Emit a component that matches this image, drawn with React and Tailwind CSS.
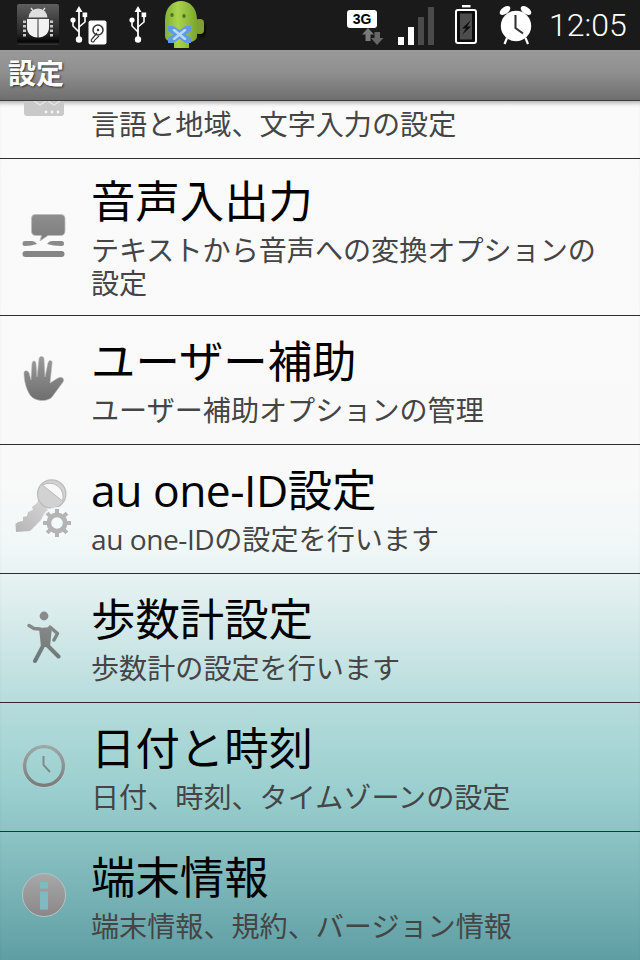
const FONT = "font-['Open_Sans','Noto_Sans_CJK_JP',sans-serif]";

function DebugIcon() {
  return (
    <svg width="44" height="44" viewBox="0 0 44 44">
      <defs>
        <linearGradient id="dbg" x1="0" y1="0" x2="0" y2="1">
          <stop offset="0" stopColor="#5e5e5e" />
          <stop offset="0.72" stopColor="#262626" />
          <stop offset="0.92" stopColor="#050505" />
          <stop offset="1" stopColor="#3a3a3a" />
        </linearGradient>
      </defs>
      <rect x="1" y="1" width="42" height="41" rx="2" fill="url(#dbg)" />
      <path d="M12.5 14.5 A9.5 9 0 0 1 31.5 14.5 Z" fill="#dedede" />
      <path d="M15 5 l3 4 M29 5 l-3 4" stroke="#dedede" strokeWidth="1.3" />
      <path d="M11 16 H21.5 V34.5 C15.5 34.5 11 30 11 25 Z M22.5 16 H33 V25 C33 30 28.5 34.5 22.5 34.5 Z" fill="#f2f2f2" />
      <path d="M7 17.5h3v2.6H7z M7 22h3v2.6H7z M7 26.5h3v2.6H7z M7 31h3v2.6H7z M34 17.5h3v2.6h-3z M34 22h3v2.6h-3z M34 26.5h3v2.6h-3z M34 31h3v2.6h-3z" fill="#c9c9c9" />
    </svg>
  );
}

function Usb() {
  return (
    <svg width="20" height="40" viewBox="0 0 20 40" fill="none">
      <path d="M10 1 L6.5 7 H13.5 Z" fill="#fff" />
      <path d="M10 5 V34" stroke="#fff" strokeWidth="1.8" />
      <path d="M4 15 V21 L10 27" stroke="#fff" strokeWidth="1.6" />
      <path d="M16 10 V17 L10 22" stroke="#fff" strokeWidth="1.6" />
      <circle cx="4" cy="15" r="2.6" fill="#fff" />
      <rect x="13.6" y="7.5" width="4.6" height="4.6" fill="#fff" />
      <circle cx="10" cy="34.5" r="3.2" fill="#fff" />
    </svg>
  );
}

function Disk() {
  return (
    <svg width="19" height="25" viewBox="0 0 19 25">
      <rect x="0.5" y="0.5" width="18" height="24" rx="2" fill="#fff" />
      <circle cx="10" cy="10" r="5" fill="none" stroke="#333" strokeWidth="1.5" />
      <circle cx="10" cy="10" r="1.2" fill="#333" />
      <path d="M9 13 L4 19 a1.6 1.6 0 1 0 2.4 1.4 L11 16" fill="none" stroke="#333" strokeWidth="1.2" />
    </svg>
  );
}

function GreenDroid() {
  return (
    <svg width="44" height="50" viewBox="0 0 44 50">
      <defs>
        <linearGradient id="drd" x1="0" y1="0" x2="1" y2="0">
          <stop offset="0" stopColor="#7fb035" />
          <stop offset="0.4" stopColor="#aad44c" />
          <stop offset="1" stopColor="#7ba52c" />
        </linearGradient>
        <filter id="sf"><feGaussianBlur stdDeviation="1.6" /></filter>
        <filter id="bf"><feGaussianBlur stdDeviation="0.7" /></filter>
      </defs>
      <ellipse cx="39" cy="30" rx="4" ry="8" fill="#000" opacity="0.6" filter="url(#sf)" />
      <rect x="32" y="19" width="9" height="15" rx="4" fill="#7f9f32" />
      <path d="M2 20 C2 7 10 1 18 1 C26 1 34 7 34 20 V36 C34 40 30 42 26 42 V48 H11 V42 C6 42 2 40 2 36 Z" fill="url(#drd)" />
      <ellipse cx="9" cy="15" rx="1.7" ry="2" fill="#4f7518" />
      <ellipse cx="21" cy="16" rx="1.7" ry="2" fill="#4f7518" />
      <path d="M7 28 L26 41 M26 28 L7 41" stroke="#5f9ae6" strokeWidth="7" strokeLinecap="round" filter="url(#bf)" />
      <path d="M11 30 L22 39 M22 30 L11 39" stroke="#b9d9f7" strokeWidth="2.6" strokeLinecap="round" filter="url(#bf)" />
    </svg>
  );
}

function NetArrows() {
  return (
    <svg width="22" height="18" viewBox="0 0 22 18">
      <path d="M6 0 L12 6.5 H8.5 V13 H3.5 V6.5 H0 Z" fill="#7a7a7a" />
      <path d="M15 17 L21.5 10 H18 V4 H12.5 V10 H9 Z" fill="#666" />
    </svg>
  );
}

function Battery() {
  return (
    <svg width="24" height="40" viewBox="0 0 24 40">
      <rect x="8" y="0" width="8.5" height="2.4" fill="#fff" />
      <rect x="2" y="5" width="20" height="33" rx="2" fill="#0c0c0c" stroke="#fff" strokeWidth="2" />
      <rect x="6" y="8.5" width="12" height="26" fill="#4d4d4d" />
      <path d="M17 15 L8 23.5 H12 L8 30 L17 21.5 H13 Z" fill="#0e0e0e" />
    </svg>
  );
}

function Alarm() {
  return (
    <svg width="36" height="40" viewBox="0 0 36 40">
      <ellipse cx="7" cy="5.5" rx="6" ry="3.4" fill="#fff" transform="rotate(-35 7 5.5)" />
      <ellipse cx="28" cy="5.5" rx="6" ry="3.4" fill="#fff" transform="rotate(35 28 5.5)" />
      <path d="M9 33 L6.5 39 M27.5 33 L30 39" stroke="#fff" strokeWidth="2.2" />
      <circle cx="18" cy="21" r="15.2" fill="#fff" />
      <path d="M17.5 10 V23 L25 28.5" fill="none" stroke="#333" strokeWidth="2.1" />
    </svg>
  );
}

function Speech() {
  return (
    <svg width="44" height="44" viewBox="0 0 44 44">
      <defs>
        <linearGradient id="sp" x1="0" y1="0" x2="0" y2="1">
          <stop offset="0" stopColor="#8e8e8e" />
          <stop offset="1" stopColor="#7d7d7d" />
        </linearGradient>
      </defs>
      <path d="M13 0.5 H39 Q43 0.5 43 4.5 V17 Q43 21.5 38 21.5 H26 L18 27 L19.5 21.5 H14 Q9.5 21.5 9.5 17 V4.5 Q9.5 0.5 13 0.5 Z" fill="url(#sp)" stroke="#bdbdbd" strokeWidth="0.8" />
      <path d="M3 27 H10 Q13 27 15 30 Q9 32 3 32 Q0.5 32 0.5 29.5 Q0.5 27 3 27 Z" fill="#8a8a8a" />
      <path d="M25 30 Q27 27 30 27 H39.5 Q42 27 42 29.5 Q42 32 39.5 32 Q31 32 25 30 Z" fill="#8a8a8a" />
      <rect x="0.5" y="37" width="42" height="6" rx="3" fill="#858585" />
    </svg>
  );
}

function Hand() {
  return (
    <svg width="42" height="46" viewBox="0 0 42 46">
      <defs>
        <linearGradient id="hd" x1="0" y1="0" x2="0" y2="1">
          <stop offset="0" stopColor="#9a9a9a" />
          <stop offset="1" stopColor="#6e6e6e" />
        </linearGradient>
      </defs>
      <path d="M7 39 C3 33 1 24 1 17 C1 14 5 14 6 17 L8 24 L9 8 C9 4 13 4 13 8 L14 21 L16 3 C16 -0.5 21 -0.5 21 3 L22 21 L25 7 C26 3 30 4 29 8 L27 27 L35 22 C39 20 42 23 40 26 L29 41 C25 46 12 46 7 39 Z" fill="url(#hd)" stroke="#b8b8b8" strokeWidth="0.6" />
    </svg>
  );
}

function Gear({ x, y }) {
  const teeth = [0, 45, 90, 135];
  return (
    <g transform={`translate(${x} ${y})`}>
      {teeth.map((a) => (
        <rect key={a} x="-2" y="-14" width="4" height="28" fill="#b4b4b4" transform={`rotate(${a})`} />
      ))}
      <circle r="10.5" fill="#b4b4b4" />
      <circle r="5.8" fill="#f4f9f9" />
    </g>
  );
}

function KeyGear() {
  return (
    <svg width="58" height="58" viewBox="0 0 58 58">
      <defs>
        <linearGradient id="ky" x1="1" y1="0" x2="0" y2="1">
          <stop offset="0" stopColor="#dadada" />
          <stop offset="1" stopColor="#b4b4b4" />
        </linearGradient>
      </defs>
      <path d="M25 17 L22 24 L17 28 L18 31 L13 33 L12 37 L8 38 L8 42 L3 43 L0.5 45 L1 53 L15 52 L34 33 Z" fill="url(#ky)" />
      <circle cx="36.7" cy="15" r="14.2" fill="#d2d2d2" stroke="#bcbcbc" strokeWidth="1.3" />
      <path d="M27.5 6.2 A13.6 13.6 0 0 1 47.5 22 Z" fill="#f8f8f8" stroke="#b8b8b8" strokeWidth="1" />
      <circle cx="42" cy="44" r="16" fill="#f4f9f9" opacity="0.85" />
      <Gear x={42} y={44} />
    </svg>
  );
}

function Walker() {
  return (
    <svg width="34" height="54" viewBox="0 0 34 54">
      <defs>
        <linearGradient id="wk" gradientUnits="userSpaceOnUse" x1="0" y1="10" x2="0" y2="54">
          <stop offset="0" stopColor="#8b8b8b" />
          <stop offset="1" stopColor="#6b7677" />
        </linearGradient>
      </defs>
      <circle cx="17" cy="6" r="4.4" fill="#8a8a8a" />
      <path d="M12 18 L25 17 L23 37 L14 37 Z" fill="url(#wk)" />
      <path d="M2 15.5 L7 18.5 L13 19 M23 17 L30.5 23.5 L27 30" fill="none" stroke="url(#wk)" strokeWidth="3.4" strokeLinejoin="round" strokeLinecap="round" />
      <path d="M17 34 L8 51 M19 34 L31.5 46.5" fill="none" stroke="url(#wk)" strokeWidth="4" strokeLinecap="round" />
    </svg>
  );
}

function Clock() {
  return (
    <svg width="44" height="44" viewBox="0 0 44 44">
      <defs>
        <linearGradient id="ck" x1="0" y1="0" x2="0" y2="1">
          <stop offset="0" stopColor="#9ba8a8" />
          <stop offset="1" stopColor="#7b7b7b" />
        </linearGradient>
      </defs>
      <circle cx="22" cy="22" r="19.5" fill="none" stroke="url(#ck)" strokeWidth="3.6" />
      <circle cx="22" cy="22" r="21.5" fill="none" stroke="#bcd0d0" strokeWidth="0.7" />
      <path d="M21.5 12 V21 L28 28" fill="none" stroke="#7f8788" strokeWidth="1.9" />
    </svg>
  );
}

function Info() {
  return (
    <svg width="44" height="44" viewBox="0 0 44 44">
      <defs>
        <linearGradient id="inf" x1="0" y1="0" x2="0" y2="1">
          <stop offset="0" stopColor="#a8a8a8" />
          <stop offset="1" stopColor="#8a8788" />
        </linearGradient>
      </defs>
      <circle cx="22" cy="22" r="21.5" fill="url(#inf)" stroke="#b4c4c4" strokeWidth="1" />
      <rect x="18" y="9" width="8" height="6.5" fill="#7fbac0" />
      <rect x="18" y="18.5" width="8" height="18" fill="#7fbac0" />
    </svg>
  );
}

function ClippedIcon() {
  return (
    <svg width="40" height="15" viewBox="0 0 40 15">
      <path d="M0 0 H40 V12 Q40 15 37 15 H3 Q0 15 0 12 Z" fill="#c9c9c9" />
      <path d="M10 0 L16 4 L22 0 M24 0 L30 4 L36 0" fill="none" stroke="#e4e4e4" strokeWidth="1.5" />
      <circle cx="22" cy="11" r="1.4" fill="#f5f5f5" />
      <circle cx="28" cy="11" r="1.4" fill="#f5f5f5" />
      <circle cx="34" cy="11" r="1.4" fill="#f5f5f5" />
    </svg>
  );
}

function Row({ icon, title, sub }) {
  return (
    <div className="flex border-b border-[#2e2e2e]">
      <div className="w-[88px] shrink-0 pb-[2px] flex items-center justify-center">{icon}</div>
      <div className="flex-1 pl-[4px] -ml-[1px] pr-[30px] pb-[4px] flex flex-col justify-center gap-[2px]">
        <div className="text-[44.4px] leading-[62px] text-black">{title}</div>
        <div className="text-[28.1px] leading-[33px] text-[#454545]">{sub}</div>
      </div>
    </div>
  );
}

export default function App() {
  return (
    <div className={`w-[640px] h-[960px] overflow-hidden flex flex-col ${FONT}`}>
      <div className="h-[50px] shrink-0 bg-[#1a1a1b] flex items-center">
        <div className="ml-[16px] mb-[1px]"><DebugIcon /></div>
        <div className="ml-[9px]"><Usb /></div>
        <div className="-ml-[1px] mt-[15px]"><Disk /></div>
        <div className="ml-[21px]"><Usb /></div>
        <div className="ml-[15px]"><GreenDroid /></div>
        <div className="ml-[140px] flex flex-col items-end w-[37px] mt-[6px]">
          <div className="w-[30px] h-[18px] self-start bg-white rounded-[3px] text-[14px] leading-[18px] font-bold text-center text-black font-['Liberation_Sans',sans-serif]">3G</div>
          <NetArrows />
        </div>
        <div className="ml-[14px] flex items-end gap-[4px] h-[38px] mt-[1px]">
          <div className="w-[6px] h-[8px] bg-white" />
          <div className="w-[6px] h-[18px] bg-white" />
          <div className="w-[6px] h-[28px] bg-[#4a4a4a]" />
          <div className="w-[6px] h-[38px] bg-[#4a4a4a]" />
        </div>
        <div className="ml-[20px]"><Battery /></div>
        <div className="ml-[20px]"><Alarm /></div>
        <div className="ml-[15px] text-[32px] font-light text-white font-['Roboto',sans-serif] leading-none">12:05</div>
      </div>

      <div className="h-[51px] shrink-0 bg-[linear-gradient(#9a9a9b,#8f8f90_45%,#6e6e6e)] border-b border-[#3d3d3d] flex items-center pl-[8px] pb-[5px]">
        <span className="text-[28px] leading-none font-bold text-white [text-shadow:1px_1px_2px_#333]">設定</span>
      </div>

      <div className="flex-1 grid grid-rows-[58px_157px_129px_129px_129px_129px_129px_auto] shadow-[inset_0_5px_4px_-3px_rgba(0,0,0,0.3)] bg-[linear-gradient(#fafafa_0%,#f9f9f9_44%,#f0f7f7_52%,#d9ebeb_60%,#b6dcdc_70%,#9bcfcf_80%,#7fb8bb_90%,#5e9ea3_100%)]">
        <div className="flex border-b border-[#2e2e2e] overflow-hidden">
          <div className="w-[88px] shrink-0 pl-[24px]"><ClippedIcon /></div>
          <div className="pl-[4px] -ml-[1px] mt-[7px] text-[28.1px] leading-[33px] text-[#454545]">言語と地域、文字入力の設定</div>
        </div>
        <Row icon={<Speech />} title="音声入出力" sub="テキストから音声への変換オプションの設定" />
        <Row icon={<Hand />} title="ユーザー補助" sub="ユーザー補助オプションの管理" />
        <Row
          icon={<KeyGear />}
          title={<><span className="tracking-[-0.5px]">au one-ID</span>設定</>}
          sub={<><span className="tracking-[-0.45px]">au one-ID</span>の設定を行います</>}
        />
        <Row icon={<Walker />} title="歩数計設定" sub="歩数計の設定を行います" />
        <Row icon={<Clock />} title="日付と時刻" sub="日付、時刻、タイムゾーンの設定" />
        <Row icon={<Info />} title="端末情報" sub="端末情報、規約、バージョン情報" />
      </div>
    </div>
  );
}
